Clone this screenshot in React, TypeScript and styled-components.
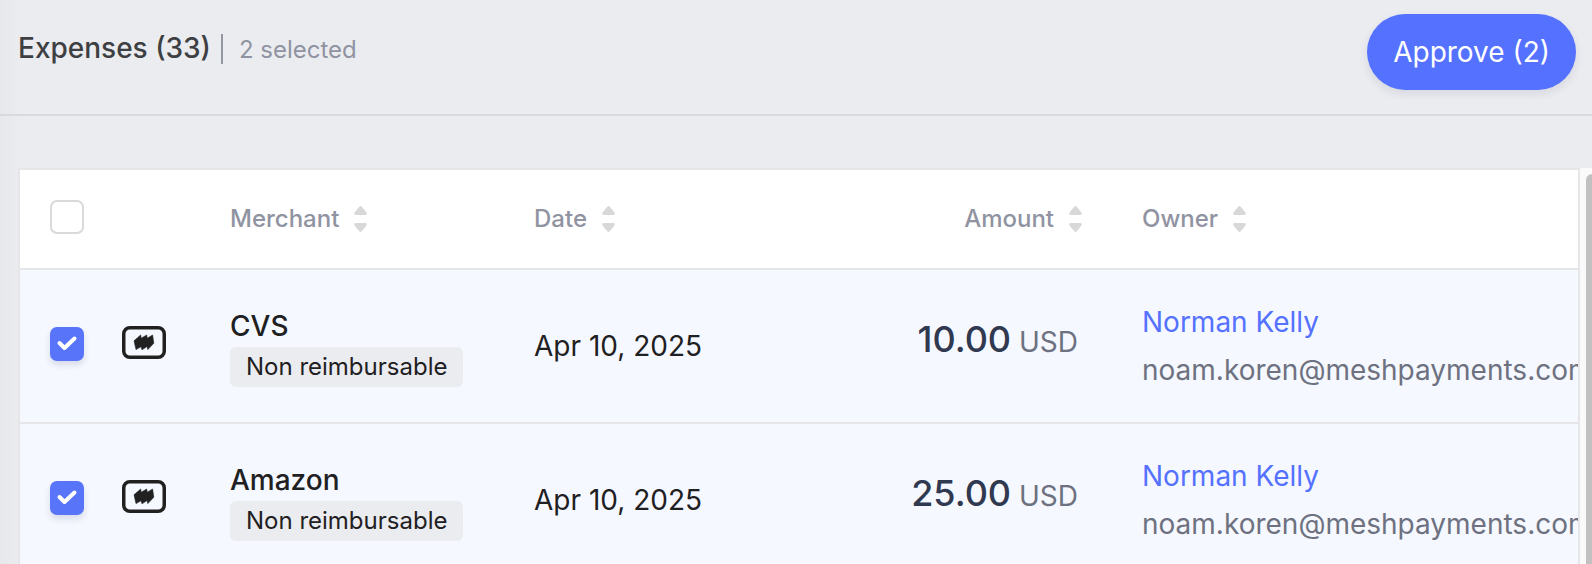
import React, { useState } from "react";
import styled, { createGlobalStyle } from "styled-components";

const GlobalStyle = createGlobalStyle`
  *, *::before, *::after { box-sizing: border-box; }
  body {
    margin: 0;
    background: #ebecf0;
    color: #1f2022;
    font-family: Inter, "Liberation Sans", sans-serif;
    font-size: 28px;
    line-height: 34px;
  }
`;

const Page = styled.main`
  display: flex;
  flex-direction: column;
  height: 100vh;
  overflow: hidden;
  background: linear-gradient(to right, #e7e8ec, #ebecf0 20px);
`;

const Toolbar = styled.header`
  display: flex;
  flex: none;
  align-items: center;
  justify-content: space-between;
  padding: 14px 16px 24px 18px;
  border-bottom: 2px solid #d9dade;
`;

const Summary = styled.div`
  display: flex;
  align-items: baseline;
  padding-bottom: 6px;
`;

const Title = styled.h1`
  margin: 0;
  color: #3e3f42;
  font-size: 28px;
  font-weight: 500;
`;

const Divider = styled.span`
  align-self: center;
  width: 2px;
  height: 30px;
  margin: 0 16px 0 10px;
  background: #9396a3;
`;

const SelectedCount = styled.span`
  color: #9093a1;
  font-size: 24px;
`;

const ApproveButton = styled.button`
  height: 76px;
  padding: 0 26px;
  border: 0;
  border-radius: 38px;
  background: #5571ff;
  box-shadow: 0 4px 8px rgba(40, 50, 90, 0.1);
  color: #fff;
  font: 400 28px/34px Inter, "Liberation Sans", sans-serif;
  cursor: pointer;
`;

const ListArea = styled.section`
  display: flex;
  flex: 1;
  min-height: 0;
  margin-top: 52px;
  padding-left: 18px;
`;

const Scroller = styled.div`
  flex: 1;
  min-width: 0;
  overflow: hidden;
  border: solid #e6e6e8;
  border-width: 2px 2px 0;
`;

const ScrollTrack = styled.div`
  flex: none;
  width: 12px;
  padding: 6px 0 0 6px;
  background: #fafafa;
`;

const ScrollThumb = styled.div`
  height: 100%;
  border-radius: 6px 0 0 0;
  background: #c1c1c1;
`;

const Table = styled.table`
  width: 100%;
  table-layout: fixed;
  border-spacing: 0;
`;

const Col = styled.col<{ $width?: number }>`
  width: ${(p) => (p.$width ? `${p.$width}px` : "auto")};
`;

const HeadCell = styled.th<{ $end?: boolean }>`
  height: 100px;
  padding: 0 20px 4px;
  border-bottom: 2px solid #e6e6e8;
  background: #fff;
  text-align: ${(p) => (p.$end ? "right" : "left")};
`;

const SelectHeadCell = styled(HeadCell)`
  padding: 0 0 4px 30px;
`;

const SortButton = styled.button`
  display: inline-flex;
  align-items: center;
  gap: 15px;
  padding: 0;
  border: 0;
  background: none;
  color: #9093a1;
  font: 500 24px/30px Inter, "Liberation Sans", sans-serif;
  vertical-align: middle;
  cursor: pointer;
`;

const Row = styled.tr<{ $selected: boolean }>`
  background: ${(p) => (p.$selected ? "#f5f8ff" : "#fff")};
`;

const Cell = styled.td`
  height: 154px;
  padding: 0 20px;
  border-bottom: 2px solid #e6e6e8;
  overflow: hidden;
  white-space: nowrap;
`;

const SelectCell = styled(Cell)`
  padding: 0 0 4px 30px;
`;

const TypeCell = styled(Cell)`
  padding-bottom: 8px;
`;

const AmountCell = styled(Cell)`
  padding: 0 44px 12px 0;
  color: #6e7180;
  text-align: right;
`;

const AmountHeadCell = styled(HeadCell)`
  padding-right: 40px;
`;

const OwnerCell = styled(Cell)`
  padding-right: 0;
  line-height: 48px;
`;

const CheckBox = styled.span`
  display: block;
  position: relative;
  width: 34px;
  height: 34px;

  svg {
    position: absolute;
    inset: 0;
    pointer-events: none;
  }
`;

const CheckInput = styled.input`
  appearance: none;
  display: block;
  width: 34px;
  height: 34px;
  margin: 0;
  border: 2px solid #d9d9db;
  border-radius: 7px;
  background: #fff;
  cursor: pointer;

  &:checked {
    border-color: #5875fa;
    background: #5875fa;
    box-shadow: 0 4px 6px rgba(40, 50, 90, 0.14);
  }
`;

const MerchantName = styled.div`
  font-weight: 500;
  line-height: 42px;
`;

const Tag = styled.span`
  display: block;
  width: fit-content;
  padding: 0 16px;
  border-radius: 6px;
  background: #ebecf0;
  font-size: 24px;
  line-height: 40px;
`;

const AmountValue = styled.strong`
  color: #303950;
  font-size: 36px;
  font-weight: 500;
`;

const OwnerLink = styled.a`
  color: #5571ff;
  text-decoration: none;
`;

const OwnerEmail = styled.div`
  color: #6e7180;
`;

const Icon = styled.svg`
  display: block;
  flex: none;
`;

const SortIcon = () => (
  <Icon width="13" height="26" viewBox="0 0 13 26" fill="#d8d8d8" aria-hidden="true">
    <path d="M5.2.8a1.8 1.8 0 0 1 2.6 0l4.500 5.400c1 1.300.4 2.800-1 2.800H1.700C.3 9-.3 7.500.7 6.200Z" />
    <path d="M5.200 25.200a1.800 1.800 0 0 0 2.600 0l4.500-5.400c1-1.300.4-2.800-1-2.800H1.700c-1.400 0-2 1.500-1 2.800Z" />
  </Icon>
);

const CardIcon = () => (
  <Icon width="44" height="33" viewBox="0 0 44 33" role="img" aria-label="Card">
    <rect x="1.750" y="1.750" width="40.500" height="29.500" rx="6" fill="none" stroke="#202020" strokeWidth="3.500" />
    <path
      d="M12 14.800 18.700 9 19.200 12.200 24.700 9 25.200 12.200 30.600 9 31.800 17.200 25.800 23.600 25 20.600 20 23.800 19 20.800 14 23.600Z"
      fill="#202020"
      stroke="#202020"
      strokeWidth="0.600"
      strokeLinejoin="round"
    />
  </Icon>
);

type CheckProps = { label: string; checked: boolean; onChange: () => void };

const Check = ({ label, checked, onChange }: CheckProps) => (
  <CheckBox>
    <CheckInput type="checkbox" aria-label={label} checked={checked} onChange={onChange} />
    {checked && (
      <svg width="34" height="34" viewBox="0 0 34 34" fill="none" aria-hidden="true">
        <path d="m9.500 16 5 5 10-9.500" stroke="#fff" strokeWidth="4" strokeLinecap="round" strokeLinejoin="round" />
      </svg>
    )}
  </CheckBox>
);

const expenses = [
  { id: 1, merchant: "CVS", date: "Apr 10, 2025", amount: "10.00" },
  { id: 2, merchant: "Amazon", date: "Apr 10, 2025", amount: "25.00" },
];

const columns = ["Merchant", "Date", "Amount", "Owner"];

export default function App() {
  const [selected, setSelected] = useState<number[]>([1, 2]);
  const toggle = (id: number) =>
    setSelected((ids) => (ids.includes(id) ? ids.filter((i) => i !== id) : [...ids, id]));

  return (
    <Page>
      <GlobalStyle />
      <Toolbar>
        <Summary>
          <Title>Expenses (33)</Title>
          <Divider />
          <SelectedCount>{selected.length} selected</SelectedCount>
        </Summary>
        <ApproveButton type="button">Approve ({selected.length})</ApproveButton>
      </Toolbar>
      <ListArea>
        <Scroller>
          <Table>
            <colgroup>
              <Col $width={82} />
              <Col $width={108} />
              <Col $width={304} />
              <Col $width={316} />
              <Col $width={292} />
              <Col />
            </colgroup>
            <thead>
              <tr>
                <SelectHeadCell>
                  <Check label="Select all expenses" checked={false} onChange={() => setSelected([])} />
                </SelectHeadCell>
                <HeadCell aria-label="Type" />
                {columns.map((name) => {
                  const isAmount = name === "Amount";
                  const NamedCell = isAmount ? AmountHeadCell : HeadCell;
                  return (
                    <NamedCell key={name} scope="col" $end={isAmount}>
                      <SortButton type="button">
                        {name}
                        <SortIcon />
                      </SortButton>
                    </NamedCell>
                  );
                })}
              </tr>
            </thead>
            <tbody>
              {expenses.map((e) => (
                <Row key={e.id} $selected={selected.includes(e.id)}>
                  <SelectCell>
                    <Check
                      label={`Select ${e.merchant}`}
                      checked={selected.includes(e.id)}
                      onChange={() => toggle(e.id)}
                    />
                  </SelectCell>
                  <TypeCell>
                    <CardIcon />
                  </TypeCell>
                  <Cell>
                    <MerchantName>{e.merchant}</MerchantName>
                    <Tag>Non reimbursable</Tag>
                  </Cell>
                  <Cell>{e.date}</Cell>
                  <AmountCell>
                    <AmountValue>{e.amount}</AmountValue> USD
                  </AmountCell>
                  <OwnerCell>
                    <OwnerLink href="#owner">Norman Kelly</OwnerLink>
                    <OwnerEmail>noam.koren@meshpayments.com</OwnerEmail>
                  </OwnerCell>
                </Row>
              ))}
            </tbody>
          </Table>
        </Scroller>
        <ScrollTrack>
          <ScrollThumb />
        </ScrollTrack>
      </ListArea>
    </Page>
  );
}
